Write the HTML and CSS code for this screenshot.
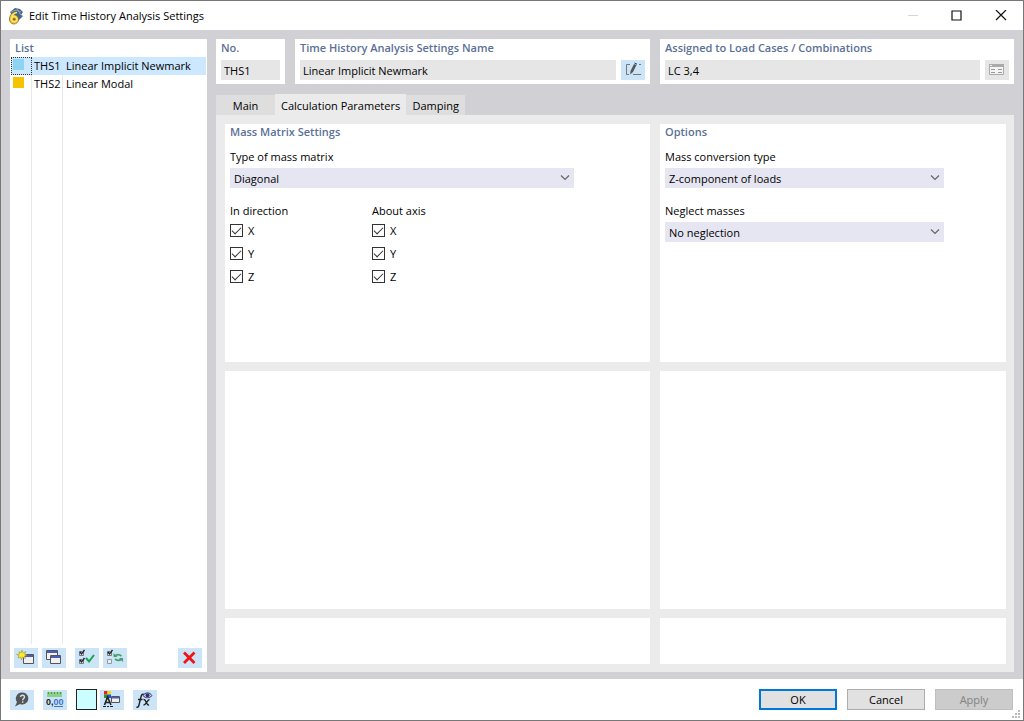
FILE: index.html
```html
<!DOCTYPE html>
<html lang="en">
<head>
<meta charset="utf-8">
<title>Edit Time History Analysis Settings</title>
<link rel="stylesheet" href="styles.css">
</head>
<body>
<div class="window">
  <header class="titlebar">
    <svg class="app-icon" width="16" height="18" viewBox="0 0 16 18">
      <path d="M2 5 7 1 12 2 15 5 13 8 15 9 10 14 4 8Z" fill="#46658c"/>
      <path d="M3 5 8 3 13 5M9 2 13 8" stroke="#8fa6bf" fill="none"/>
      <path d="M8.500 4.500C4 5 1.500 8.500 1.500 12a4.500 4.500 0 1 0 4.500-4" fill="#f1c232" stroke="#8a6a14" stroke-width=".8"/>
      <path d="M9 5.500C5.500 6 3.500 9 3.500 12a2.700 2.700 0 1 0 2.700-2.700c-1.200 0-2.200.7-2.600 1.700" fill="none" stroke="#ffe36a" stroke-width="1.600"/>
      <circle cx="6.200" cy="12.200" r="1.300" fill="#8a6a14"/>
    </svg>
    <h1 class="title">Edit Time History Analysis Settings</h1>
    <div class="window-buttons">
      <button class="window-button" aria-label="Minimize" disabled><svg width="12" height="12" viewBox="0 0 12 12"><path d="M1 5.500h10" stroke="#d6d6d6"/></svg></button>
      <button class="window-button" aria-label="Maximize"><svg width="12" height="12" viewBox="0 0 12 12"><path d="M1 1h9v9H1z" fill="none" stroke="#111" stroke-width="1.200"/></svg></button>
      <button class="window-button" aria-label="Close"><svg width="12" height="12" viewBox="0 0 12 12"><path d="m1 0 10 10M11 0 1 10" stroke="#111" stroke-width="1.200"/></svg></button>
    </div>
  </header>

  <main class="body">
    <aside class="list-panel">
      <h2 class="heading list-heading">List</h2>
      <ul class="list">
        <li class="list-row selected"><span class="cell swatch-cell"><span class="swatch blue"></span></span><span class="cell">THS1</span><span class="name">Linear Implicit Newmark</span></li>
        <li class="list-row"><span class="cell swatch-cell"><span class="swatch yellow"></span></span><span class="cell">THS2</span><span class="name">Linear Modal</span></li>
        <li class="list-row filler"><span class="cell"></span><span class="cell"></span><span></span></li>
      </ul>
      <div class="list-tools">
        <button class="tool" aria-label="New">
          <svg width="24" height="20" viewBox="0 0 24 20"><path d="M9.500 6.500h10v9h-10z" fill="#f1f1f1" stroke="#555"/><path d="M10 7h9v2h-9z" fill="#4a5cc0"/><path d="m8 2 1 3 3-1.500L10.500 6l2.500 1-2.500 1 1 2.500L8.500 9 7.500 12 6.500 9 4 10l1-2.500L2.500 6.500 5.500 6 5 3.500 7 5Z" fill="#ffe92e" stroke="#8e8a20" stroke-width=".5"/></svg>
        </button>
        <button class="tool" aria-label="Copy">
          <svg width="24" height="20" viewBox="0 0 24 20"><path d="M4.500 2.500h11v9h-11z" fill="#f1f1f1" stroke="#555"/><path d="M5 3h10v2H5z" fill="#4a5cc0"/><path d="M8.500 7.500h10v8h-10z" fill="#f1f1f1" stroke="#555"/><path d="M9 8h9v2H9z" fill="#4a5cc0"/></svg>
        </button>
        <button class="tool tool-group" aria-label="Check all">
          <svg width="24" height="20" viewBox="0 0 24 20"><path d="M8.500 4v3.500h-4v-4H7M8.500 12v3.500h-4v-4H7" fill="none" stroke="#777"/><path d="m5 4 1.500 2L9.500 2M5 12l1.500 2L9.500 10" fill="none" stroke="#222" stroke-width="1.300"/><path d="m11 10 3 3.500 5-6.500" fill="none" stroke="#18a34a" stroke-width="2"/></svg>
        </button>
        <button class="tool" aria-label="Invert selection">
          <svg width="24" height="20" viewBox="0 0 24 20"><path d="M8.500 4v3.500h-4v-4H7" fill="none" stroke="#777"/><path d="m5 4 1.500 2L9.500 2" fill="none" stroke="#222" stroke-width="1.300"/><path d="M4.500 11.500h4v4h-4z" fill="#e4eef6" stroke="#999"/><path d="M12 8c2-2 4.500-1.500 6.500 0M18.500 11c-2 2-4.500 1.500-6.500 0" fill="none" stroke="#43a268" stroke-width="1.800"/><path d="M10.500 5v4h4zM20 14v-4h-4z" fill="#43a268"/></svg>
        </button>
        <button class="tool tool-end" aria-label="Delete">
          <svg width="24" height="20" viewBox="0 0 24 20"><path d="m6 4.500 10.500 10.500M16.500 4.500 6 15" stroke="#f01414" stroke-width="2.800"/></svg>
        </button>
      </div>
    </aside>

    <section class="content">
      <div class="fields">
        <div class="card">
          <label class="heading" for="no">No.</label>
          <input class="text" id="no" value="THS1" readonly>
        </div>
        <div class="card">
          <label class="heading" for="name">Time History Analysis Settings Name</label>
          <div class="field-row">
            <input class="text" id="name" value="Linear Implicit Newmark" readonly>
            <button class="tool" aria-label="Edit name">
              <svg width="24" height="20" viewBox="0 0 24 20"><path d="M9 4.500H5.500v10H8M12 14.500h8" fill="none" stroke="#777"/><path d="m9.500 11 3.500-7 2.500 1-3.500 7-2.800 2.500Z" fill="#555"/><path d="m13.500 3 2.500 1.200" stroke="#333"/><path d="M18 4.500h2" stroke="#777"/></svg>
            </button>
          </div>
        </div>
        <div class="card">
          <label class="heading" for="assigned">Assigned to Load Cases / Combinations</label>
          <div class="field-row">
            <input class="text" id="assigned" value="LC 3,4" readonly>
            <button class="tool muted" aria-label="Show assigned" disabled>
              <svg width="24" height="20" viewBox="0 0 24 20"><path d="M4.500 5.500h14v9h-14z" fill="#f4f4f4" stroke="#aaa"/><path d="M4 4h15v3H4z" fill="#aaa"/><path d="M5 5.500h2" stroke="#eee"/><path d="M6 9.500h4M6 12.500h4M13 9.500h4M13 12.500h4" stroke="#999"/></svg>
            </button>
          </div>
        </div>
      </div>

      <div class="tabs" role="tablist">
        <button class="tab" role="tab">Main</button>
        <button class="tab active" role="tab" aria-selected="true">Calculation Parameters</button>
        <button class="tab" role="tab">Damping</button>
      </div>

      <div class="panels">
        <section class="panel">
          <h2 class="heading">Mass Matrix Settings</h2>
          <label class="label" for="matrix">Type of mass matrix</label>
          <div class="select-box">
            <select class="select" id="matrix"><option>Diagonal</option></select>
            <svg class="chevron" width="10" height="6" viewBox="0 0 10 6"><path d="m1 .5 4 4 4-4" fill="none" stroke="#666" stroke-width="1.200"/></svg>
          </div>
          <div class="checks">
            <fieldset class="check-group">
              <legend class="legend">In direction</legend>
              <label class="check"><input type="checkbox" checked>X</label>
              <label class="check"><input type="checkbox" checked>Y</label>
              <label class="check"><input type="checkbox" checked>Z</label>
            </fieldset>
            <fieldset class="check-group">
              <legend class="legend">About axis</legend>
              <label class="check"><input type="checkbox" checked>X</label>
              <label class="check"><input type="checkbox" checked>Y</label>
              <label class="check"><input type="checkbox" checked>Z</label>
            </fieldset>
          </div>
        </section>
        <section class="panel">
          <h2 class="heading">Options</h2>
          <label class="label" for="conversion">Mass conversion type</label>
          <div class="select-box">
            <select class="select" id="conversion"><option>Z-component of loads</option></select>
            <svg class="chevron" width="10" height="6" viewBox="0 0 10 6"><path d="m1 .5 4 4 4-4" fill="none" stroke="#666" stroke-width="1.200"/></svg>
          </div>
          <label class="label" for="neglect">Neglect masses</label>
          <div class="select-box">
            <select class="select" id="neglect"><option>No neglection</option></select>
            <svg class="chevron" width="10" height="6" viewBox="0 0 10 6"><path d="m1 .5 4 4 4-4" fill="none" stroke="#666" stroke-width="1.200"/></svg>
          </div>
        </section>
        <section class="panel"></section>
        <section class="panel"></section>
        <section class="panel"></section>
        <section class="panel"></section>
      </div>
    </section>
  </main>

  <footer class="footer">
    <div class="footer-tools">
      <button class="tool" aria-label="Help">
        <svg width="24" height="20" viewBox="0 0 24 20"><path d="M12.500 2.500a6 6 0 1 1-2.500 11.500L5 16.500l2-4.500A6 6 0 0 1 12.500 2.500Z" fill="#555"/><path d="M10.500 7c.3-2.500 4.300-2.300 4 .2-.2 1.300-1.800 1.300-1.800 3M12.700 11.300v1.500" fill="none" stroke="#cde4f5" stroke-width="1.400"/></svg>
      </button>
      <button class="tool" aria-label="Units and decimal places">
        <svg width="24" height="20" viewBox="0 0 24 20"><path d="M4 2h15v5H4z" fill="#8ccf87"/><path d="M5.500 2v2M8.500 2v2M11.500 2v2M14.500 2v2M17.500 2v2" stroke="#4c9a50"/><text x="3" y="15" class="decimal">0,<tspan class="decimal-blue">00</tspan></text><path d="M11 16.500h9" stroke="#3f72c8"/></svg>
      </button>
      <div class="color-group">
        <button class="color-button" aria-label="Color"></button>
        <button class="tool" aria-label="Display properties">
          <svg width="24" height="20" viewBox="0 0 24 20"><path d="M4 1h3.500v3.500H4z" fill="#e82020"/><path d="M7.500 1H11v3.500H7.500z" fill="#f5d800"/><path d="M4 4.500h3.500V8H4z" fill="#25952d"/><path d="M7.500 4.500H11V8H7.500z" fill="#244be0"/><path d="m4.500 15 3-8 3.500 8M5.500 12.500h4" fill="none" stroke="#222" stroke-width="1.600"/><path d="M3 16.500h3M7 16.500h2M10 16.500h3" stroke="#222"/><path d="M11.500 6.500h8v6h-8z" fill="#eee" stroke="#555"/><path d="M12 7h7v1.500h-7z" fill="#4a5cc0"/></svg>
        </button>
      </div>
      <button class="tool" aria-label="Formula">
        <svg width="24" height="20" viewBox="0 0 24 20"><path d="M11 4.500c-2-1-2.700.5-3.200 3L6 15c-.4 2-1.300 2.500-2.500 2M5 9.500h4.500" fill="none" stroke="#222" stroke-width="1.400"/><path d="M10.500 9.500c3-.8 2.500 6.500 5.500 5.500M16.500 9.500c-2 0-3.500 5.500-6 5.500" fill="none" stroke="#222" stroke-width="1.400"/><path d="M10 5.500c2.500-3.500 6.500-3.500 9 0-2.500 3-6.500 3-9 0Z" fill="#d7dcf2" stroke="#30316b"/><circle cx="14.500" cy="5.300" r="2" fill="#30316b"/></svg>
      </button>
    </div>
    <div class="actions">
      <button class="action primary">OK</button>
      <button class="action">Cancel</button>
      <button class="action" disabled>Apply</button>
    </div>
    <svg class="grip" width="8" height="8" viewBox="0 0 8 8"><path d="M6 0h2v2H6zM3 3h2v2H3zM6 3h2v2H6zM0 6h2v2H0zM3 6h2v2H3zM6 6h2v2H6z" fill="#bbb"/></svg>
  </footer>
</div>
</body>
</html>
```
FILE: styles.css
```css
* { box-sizing: border-box; }

body {
  margin: 0;
  font: 11px/16px "Open Sans", "Noto Sans", sans-serif;
  color: #000;
}

button, input, select { font: inherit; color: inherit; border: 0; border-radius: 0; margin: 0; padding: 0; }
svg { display: block; flex: none; }

.window {
  display: flex;
  flex-direction: column;
  min-height: 100vh;
  border: 1px solid #777;
  background: #fff;
}

.titlebar { display: flex; align-items: center; height: 29px; padding-left: 7px; gap: 5px; }
.title { flex: 1; margin: 0; font-size: 11px; font-weight: 400; }
.window-buttons { display: flex; }
.window-button { display: grid; place-items: center; width: 44px; height: 28px; background: none; }

.body {
  flex: 1;
  display: grid;
  grid-template-columns: 197px 1fr;
  gap: 9px;
  padding: 9px 9px 7px;
  background: #d1d0d5;
}

.heading { display: block; margin: 0; font-size: 11px; line-height: 16px; font-weight: 600; color: #5b7097; }

.list-panel { display: flex; flex-direction: column; background: #fff; padding: 0 1px 4px; }
.list-heading { padding: 1px 4px; }
.list { flex: 1; display: flex; flex-direction: column; margin: 0; padding: 0; list-style: none; }
.list-row { display: grid; grid-template-columns: 21px 31px 1fr; min-height: 18px; line-height: 18px; }
.list-row.selected { background: #cce8ff; }
.list-row.filler { flex: 1; }
.cell { border-right: 1px solid #e8e8e8; padding-left: 2px; }
.selected .cell { border-color: #cce8ff; }
.swatch-cell { padding: 2px; }
.selected .swatch-cell { padding: 1px; border: 1px dotted #333; }
.swatch { display: block; width: 11px; height: 11px; }
.blue { background: #8ed3f2; }
.yellow { background: #f5c400; }
.name { padding-left: 3px; }

.list-tools { display: flex; gap: 4px; padding: 4px 4px 0 3px; }
.tool { flex: none; display: grid; place-items: center; width: 24px; height: 20px; background: #cce4f7; }
.tool.muted { background: #e6e6e6; }
.tool-group { margin-left: 5px; }
.tool-end { margin-left: auto; }

.content { display: flex; flex-direction: column; min-width: 0; }
.fields { display: grid; grid-template-columns: 69px 355fr 354fr; gap: 10px; }
.card { min-width: 0; padding: 1px 5px 4px; background: #fff; }
.card .heading { margin-bottom: 4px; }
.field-row { display: flex; gap: 5px; }
.text { display: block; width: 100%; min-width: 0; height: 20px; padding: 0 3px; background: #e6e6e6; }

.tabs { display: flex; align-items: flex-end; margin-top: 10px; }
.tab { height: 20px; padding: 1px 6px 0; min-width: 59px; background: #dedede; }
.tab.active { height: 21px; padding-top: 2px; background: #ebebeb; }

.panels {
  flex: 1;
  display: grid;
  grid-template-columns: 425fr 346fr;
  grid-template-rows: 1fr 1fr 46px;
  gap: 9px 10px;
  padding: 9px 8px 8px 9px;
  background: #ebebeb;
}
.panel { min-width: 0; padding: 0 5px; background: #fff; }
.label { display: block; margin: 9px 0 3px; }
.select-box { display: grid; align-items: center; width: 83%; margin-bottom: 15px; }
.select, .chevron { grid-area: 1 / 1; }
.select { appearance: none; width: 100%; height: 20px; padding: 1px 4px 0; background: #e6e6f2; }
.chevron { justify-self: end; margin-right: 4px; pointer-events: none; }
.select-box + .label { margin-top: 0; }

.checks { display: grid; grid-template-columns: 142px 142px; }
.check-group { border: 0; margin: 0; padding: 0; }
.legend { padding: 0; }
.check { display: flex; align-items: center; gap: 5px; height: 23px; }
.check input {
  appearance: none;
  width: 13px;
  height: 13px;
  border: 1px solid #333;
  background: #fff;
  display: grid;
  place-items: center;
}
.check input:checked::before {
  content: "";
  width: 8px;
  height: 4px;
  border: solid #333;
  border-width: 0 0 1px 1px;
  transform: translateY(-1px) rotate(-45deg);
}

.footer { display: flex; align-items: center; gap: 20px; min-height: 41px; padding: 0 10px 0 9px; position: relative; }
.footer-tools { display: flex; align-items: center; gap: 9px; }
.color-group { display: flex; align-items: center; gap: 3px; }
.color-button { width: 21px; height: 21px; border: 1px solid #222; background: #ccffff; }
.actions { display: flex; gap: 10px; margin-left: auto; }
.action { width: 78px; height: 21px; border: 1px solid #adadad; background: #e1e1e1; }
.action.primary { border: 2px solid #0078d7; }
.action:disabled { background: #ccc; border-color: #bfbfbf; color: #838383; }
.grip { position: absolute; right: 3px; bottom: 2px; }
.decimal { font: bold 9px "Liberation Sans", sans-serif; fill: #222; }
.decimal-blue { fill: #3f72c8; }
```
